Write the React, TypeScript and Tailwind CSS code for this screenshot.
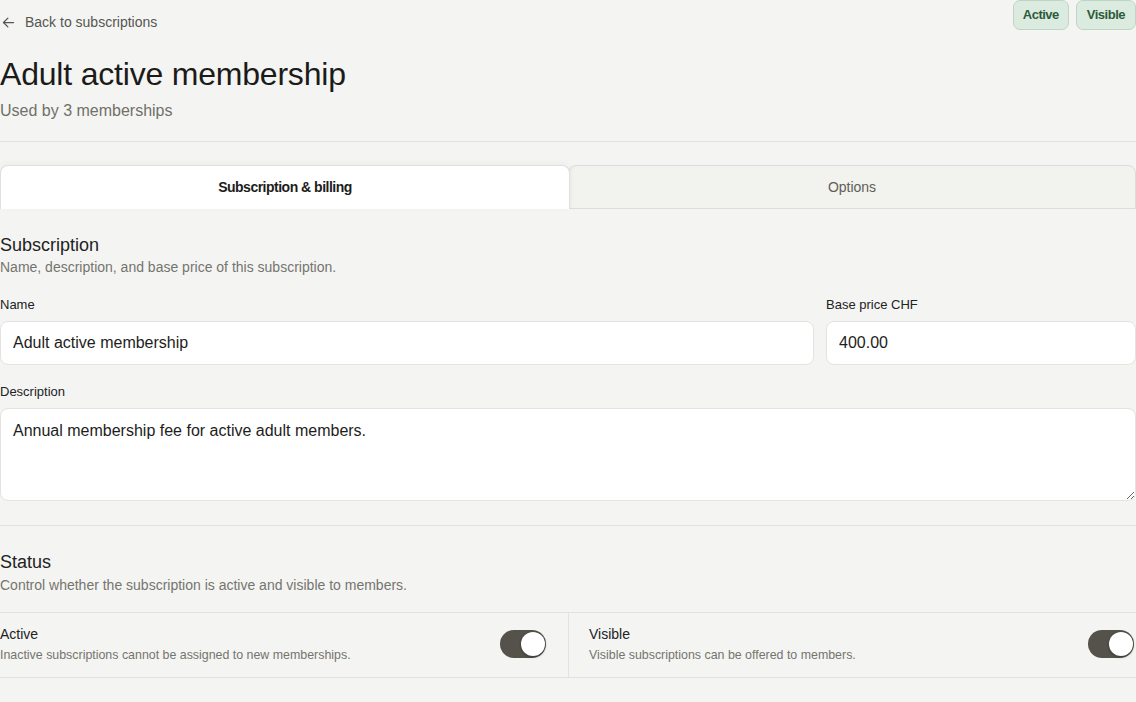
import React from "react";

function Toggle() {
  return (
    <div className="relative h-[28px] w-[46px] shrink-0 rounded-full bg-[#55524b]">
      <div className="absolute right-[1px] top-[2px] h-[24px] w-[24px] rounded-full bg-white shadow-[0_1px_3px_rgba(0,0,0,0.35)]" />
    </div>
  );
}

export default function App() {
  return (
    <div
      className="min-h-[702px] w-[1136px] bg-[#f4f5f2] text-[#1d1d1b]"
      style={{ fontFamily: '"Liberation Sans", Arial, sans-serif' }}
    >
      {/* header */}
      <div className="border-b border-[#e2e2de] pb-[18px]">
        <div className="flex items-start justify-between">
          <a className="mt-3 flex h-5 items-center gap-[9px] pl-[1px] text-[14px] leading-5 text-[#565651]">
            <svg width="15" height="15" viewBox="0 0 24 24" fill="none" stroke="currentColor" strokeWidth="2" strokeLinecap="round" strokeLinejoin="round">
              <path d="M20 12H4" />
              <path d="M11 19l-7-7 7-7" />
            </svg>
            <span>Back to subscriptions</span>
          </a>
          <div className="flex gap-[7px]">
            <span className="flex h-[30px] items-center rounded-[7px] border border-[#bcd6c3] bg-[#dcebdf] px-[9px] text-[13px] font-bold tracking-[-0.5px] text-[#2c5b3c]">
              Active
            </span>
            <span className="flex h-[30px] items-center rounded-[7px] border border-[#bcd6c3] bg-[#dcebdf] px-[10px] text-[13px] font-bold tracking-[-0.5px] text-[#2c5b3c]">
              Visible
            </span>
          </div>
        </div>
        <h1 className="mt-[22px] text-[32px] leading-10 tracking-[-0.2px] text-[#1b1b19]">Adult active membership</h1>
        <p className="mt-[5px] text-[16px] leading-6 text-[#70706b]">Used by 3 memberships</p>
      </div>

      {/* tabs */}
      <div className="mt-[23px] grid grid-cols-2">
        <div className="relative z-10 flex h-[44px] w-[570px] items-center justify-center rounded-t-[8px] border border-b-0 border-[#e0e0dc] bg-white text-[14px] font-bold tracking-[-0.5px] text-[#1d1d1b] shadow-[0_-2px_6px_rgba(0,0,0,0.03)]">
          Subscription &amp; billing
        </div>
        <div className="flex h-[44px] items-center justify-center rounded-t-[8px] border border-[#dcdcd8] bg-[#f2f2ee] pt-px text-[14px] text-[#5e5e59] shadow-[inset_3px_0_4px_-3px_rgba(0,0,0,0.08)]">
          Options
        </div>
      </div>

      {/* subscription section */}
      <div className="border-b border-[#e2e2de] pb-6">
        <h2 className="mt-6 text-[18px] leading-6 text-[#22221f]">Subscription</h2>
        <p className="text-[14px] leading-5 text-[#74746f]">Name, description, and base price of this subscription.</p>

        <div className="mt-5 flex gap-3">
          <div className="flex-1">
            <label className="block text-[13px] leading-4 text-[#22221f]">Name</label>
            <input
              defaultValue="Adult active membership"
              className="mt-2 h-[44px] w-full rounded-[8px] border border-[#e3e3df] bg-white px-3 text-[16px] text-[#1d1d1b] outline-none"
              style={{ fontFamily: '"Liberation Sans", Arial, sans-serif' }}
            />
          </div>
          <div className="w-[310px]">
            <label className="block text-[13px] leading-4 text-[#22221f]">Base price CHF</label>
            <input
              defaultValue="400.00"
              className="mt-2 h-[44px] w-full rounded-[8px] border border-[#e3e3df] bg-white px-3 text-[16px] text-[#1d1d1b] outline-none"
              style={{ fontFamily: '"Liberation Sans", Arial, sans-serif' }}
            />
          </div>
        </div>

        <label className="mt-[19px] block text-[13px] leading-4 text-[#22221f]">Description</label>
        <textarea
          defaultValue="Annual membership fee for active adult members."
          className="mt-2 block h-[93px] w-full resize-y rounded-[8px] border border-[#e3e3df] bg-white px-3 pt-[12px] text-[16px] leading-5 text-[#1d1d1b] outline-none"
          style={{ fontFamily: '"Liberation Sans", Arial, sans-serif' }}
        />
      </div>

      {/* status section */}
      <h2 className="mt-6 text-[18px] leading-6 text-[#22221f]">Status</h2>
      <p className="mt-px text-[14px] leading-5 text-[#74746f]">Control whether the subscription is active and visible to members.</p>

      <div className="mt-[17px] grid grid-cols-[569px_1fr] border-y border-[#e2e2de]">
        <div className="flex items-center justify-between border-r border-[#e2e2de] pb-[14px] pr-[22px] pt-[11px]">
          <div>
            <div className="text-[14px] leading-5 text-[#22221f]">Active</div>
            <div className="mt-[3px] text-[12.4px] leading-4 text-[#74746f]">Inactive subscriptions cannot be assigned to new memberships.</div>
          </div>
          <Toggle />
        </div>
        <div className="flex items-center justify-between pb-[14px] pl-5 pr-[2px] pt-[11px]">
          <div>
            <div className="text-[14px] leading-5 text-[#22221f]">Visible</div>
            <div className="mt-[3px] text-[12.4px] leading-4 text-[#74746f]">Visible subscriptions can be offered to members.</div>
          </div>
          <Toggle />
        </div>
      </div>

      <div className="mt-6 border-t border-[#e2e2de]" />
    </div>
  );
}
